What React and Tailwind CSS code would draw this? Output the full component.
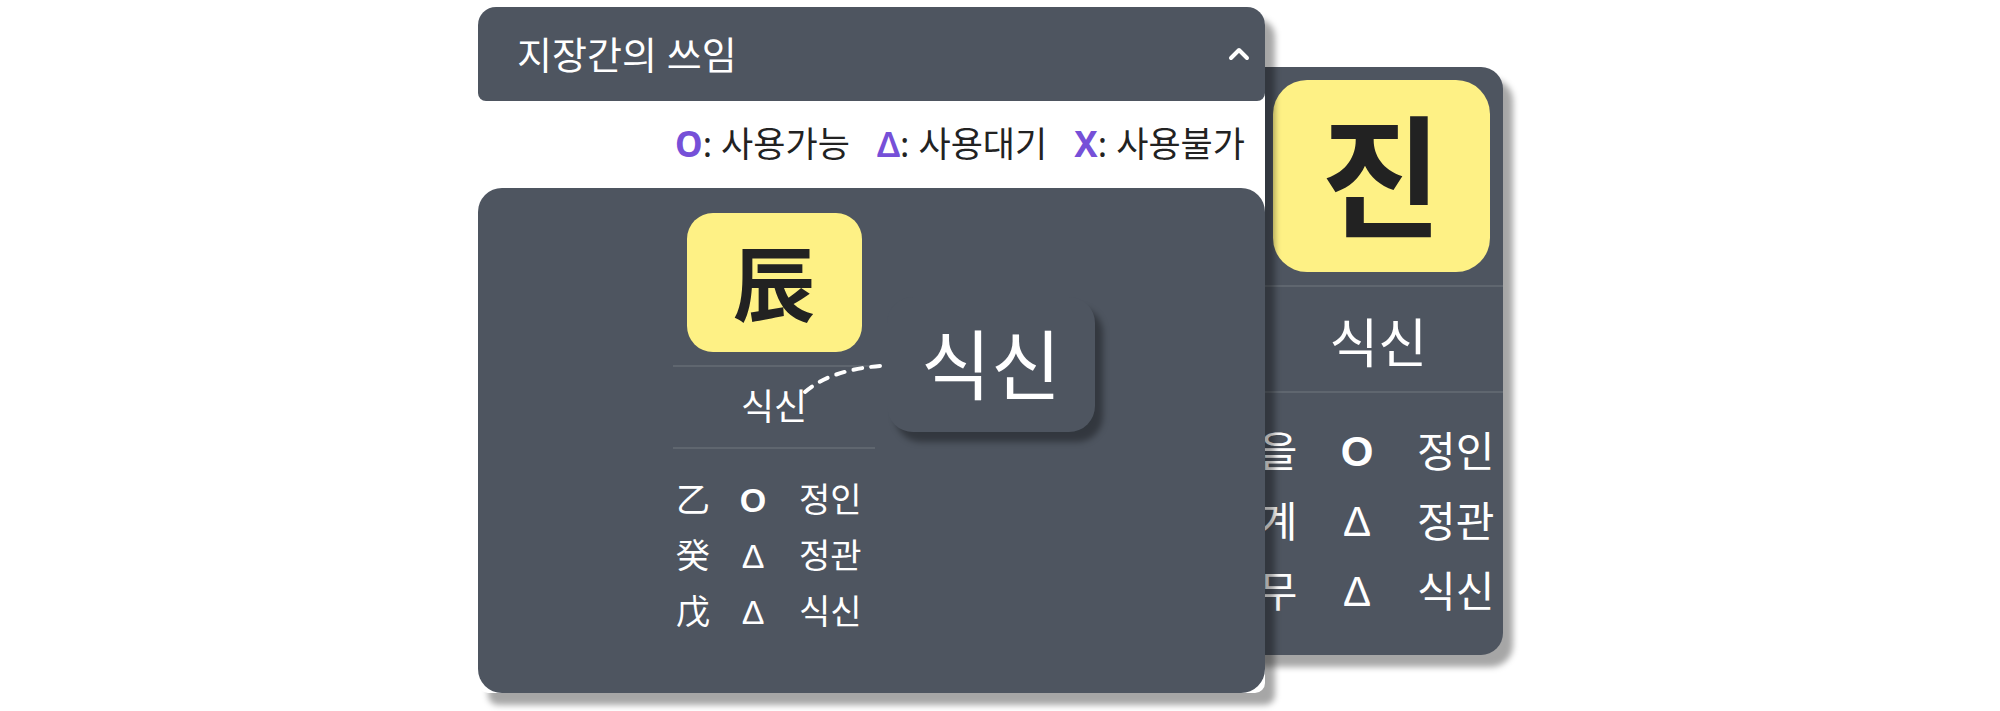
import React from "react";

const mainRows = [
  ["乙", "O", "정인"],
  ["癸", "Δ", "정관"],
  ["戊", "Δ", "식신"],
];

const zoomRows = [
  ["을", "O", "정인"],
  ["계", "Δ", "정관"],
  ["무", "Δ", "식신"],
];

function Mark({ v }) {
  return (
    <span className={"font-['Liberation_Sans',sans-serif] " + (v === "O" ? "font-bold" : "font-normal")}>
      {v}
    </span>
  );
}

function Legend() {
  return (
    <div className="h-[87px] flex items-center justify-end gap-[27px] pr-[20px] text-[35px] text-[#222]">
      <span>
        <span className="font-bold text-[#7650d8]">O</span>: 사용가능
      </span>
      <span>
        <span className="font-semibold text-[#7650d8]">Δ</span>: 사용대기
      </span>
      <span>
        <span className="font-bold text-[#7650d8]">X</span>: 사용불가
      </span>
    </div>
  );
}

// zoomed copy of the pillar card, sits behind the main card
function ZoomCard() {
  return (
    <div className="absolute left-[702px] top-[67px] w-[323px] h-[588px] z-0 rounded-[22px] bg-[#4e5560] shadow-[10px_12px_6px_rgba(0,0,0,0.35)] flex flex-col items-end pt-[13px] text-white">
      <div className="w-[217px] h-[192px] mr-[13px] rounded-[34px] bg-[#fef185] flex items-center justify-center text-[132px] font-bold text-[#222] leading-none">
        진
      </div>
      <div className="w-full h-[2px] mt-[13px] bg-[#5f666f]" />
      <div className="w-full h-[104px] flex items-center justify-end pr-[76px] pt-[6px] text-[53px] leading-none">
        식신
      </div>
      <div className="w-full h-[2px] bg-[#5f666f]" />
      <div className="w-full mt-[23px] text-[42px]">
        {zoomRows.map((r) => (
          <div key={r[0]} className="flex items-center h-[70px] leading-none">
            <span className="w-[50px] ml-[73px] text-center">{r[0]}</span>
            <span className="w-[50px] ml-[29px] text-center">
              <Mark v={r[1]} />
            </span>
            <span className="ml-[35px]">{r[2]}</span>
          </div>
        ))}
      </div>
    </div>
  );
}

function PillarBody() {
  return (
    <div className="relative h-[505px] rounded-[24px] bg-[#4e5560] pl-[195px] pt-[25px] text-white">
      <div className="w-[202px] flex flex-col">
        <div className="mx-auto w-[175px] h-[139px] rounded-[26px] bg-[#fef185] flex items-center justify-center text-[82px] font-bold text-[#222] leading-none">
          辰
        </div>
        <div className="h-[2px] mt-[13px] bg-[#5f666f]" />
        <div className="h-[80px] flex items-center justify-center text-[36px] leading-none">
          식신
        </div>
        <div className="h-[2px] bg-[#5f666f]" />
        <div className="mt-[22px] text-[34px]">
          {mainRows.map((r) => (
            <div key={r[0]} className="flex items-center h-[56px] leading-none">
              <span className="w-[40px] text-center">{r[0]}</span>
              <span className="w-[40px] ml-[20px] text-center">
                <Mark v={r[1]} />
              </span>
              <span className="ml-[26px]">{r[2]}</span>
            </div>
          ))}
        </div>
      </div>

      {/* dotted leader from the label to the callout */}
      <svg className="absolute left-0 top-0 overflow-visible" width="10" height="10">
        <path
          d="M327 204 Q352 182 402 178"
          fill="none"
          stroke="white"
          strokeWidth="4"
          strokeLinecap="round"
          strokeDasharray="9 9"
        />
      </svg>

      <div className="absolute left-[409px] top-[109px] w-[208px] h-[135px] rounded-[26px] bg-[#4e5560] shadow-[8px_10px_6px_rgba(0,0,0,0.35)] flex items-center justify-center text-[76px] leading-none text-white">
        식신
      </div>
    </div>
  );
}

export default function App() {
  return (
    <div className="min-h-screen bg-white font-['Noto_Sans','Noto_Sans_CJK_KR',sans-serif]">
      <div className="relative ml-[478px] w-[787px] pt-[7px]">
        <div className="relative z-10 bg-white rounded-t-[18px] rounded-b-[10px] shadow-[10px_12px_6px_rgba(0,0,0,0.35)]">
          <div className="h-[94px] flex items-center justify-between pl-[39px] pr-[15px] rounded-t-[18px] rounded-b-[8px] bg-[#4e5560]">
            <span className="text-[38px] text-white leading-none">지장간의 쓰임</span>
            <svg width="22" height="14" viewBox="0 0 22 14">
              <path
                d="M3 11 L11 3 L19 11"
                fill="none"
                stroke="white"
                strokeWidth="4"
                strokeLinecap="round"
                strokeLinejoin="round"
              />
            </svg>
          </div>
          <Legend />
          <PillarBody />
        </div>
        <ZoomCard />
      </div>
    </div>
  );
}
